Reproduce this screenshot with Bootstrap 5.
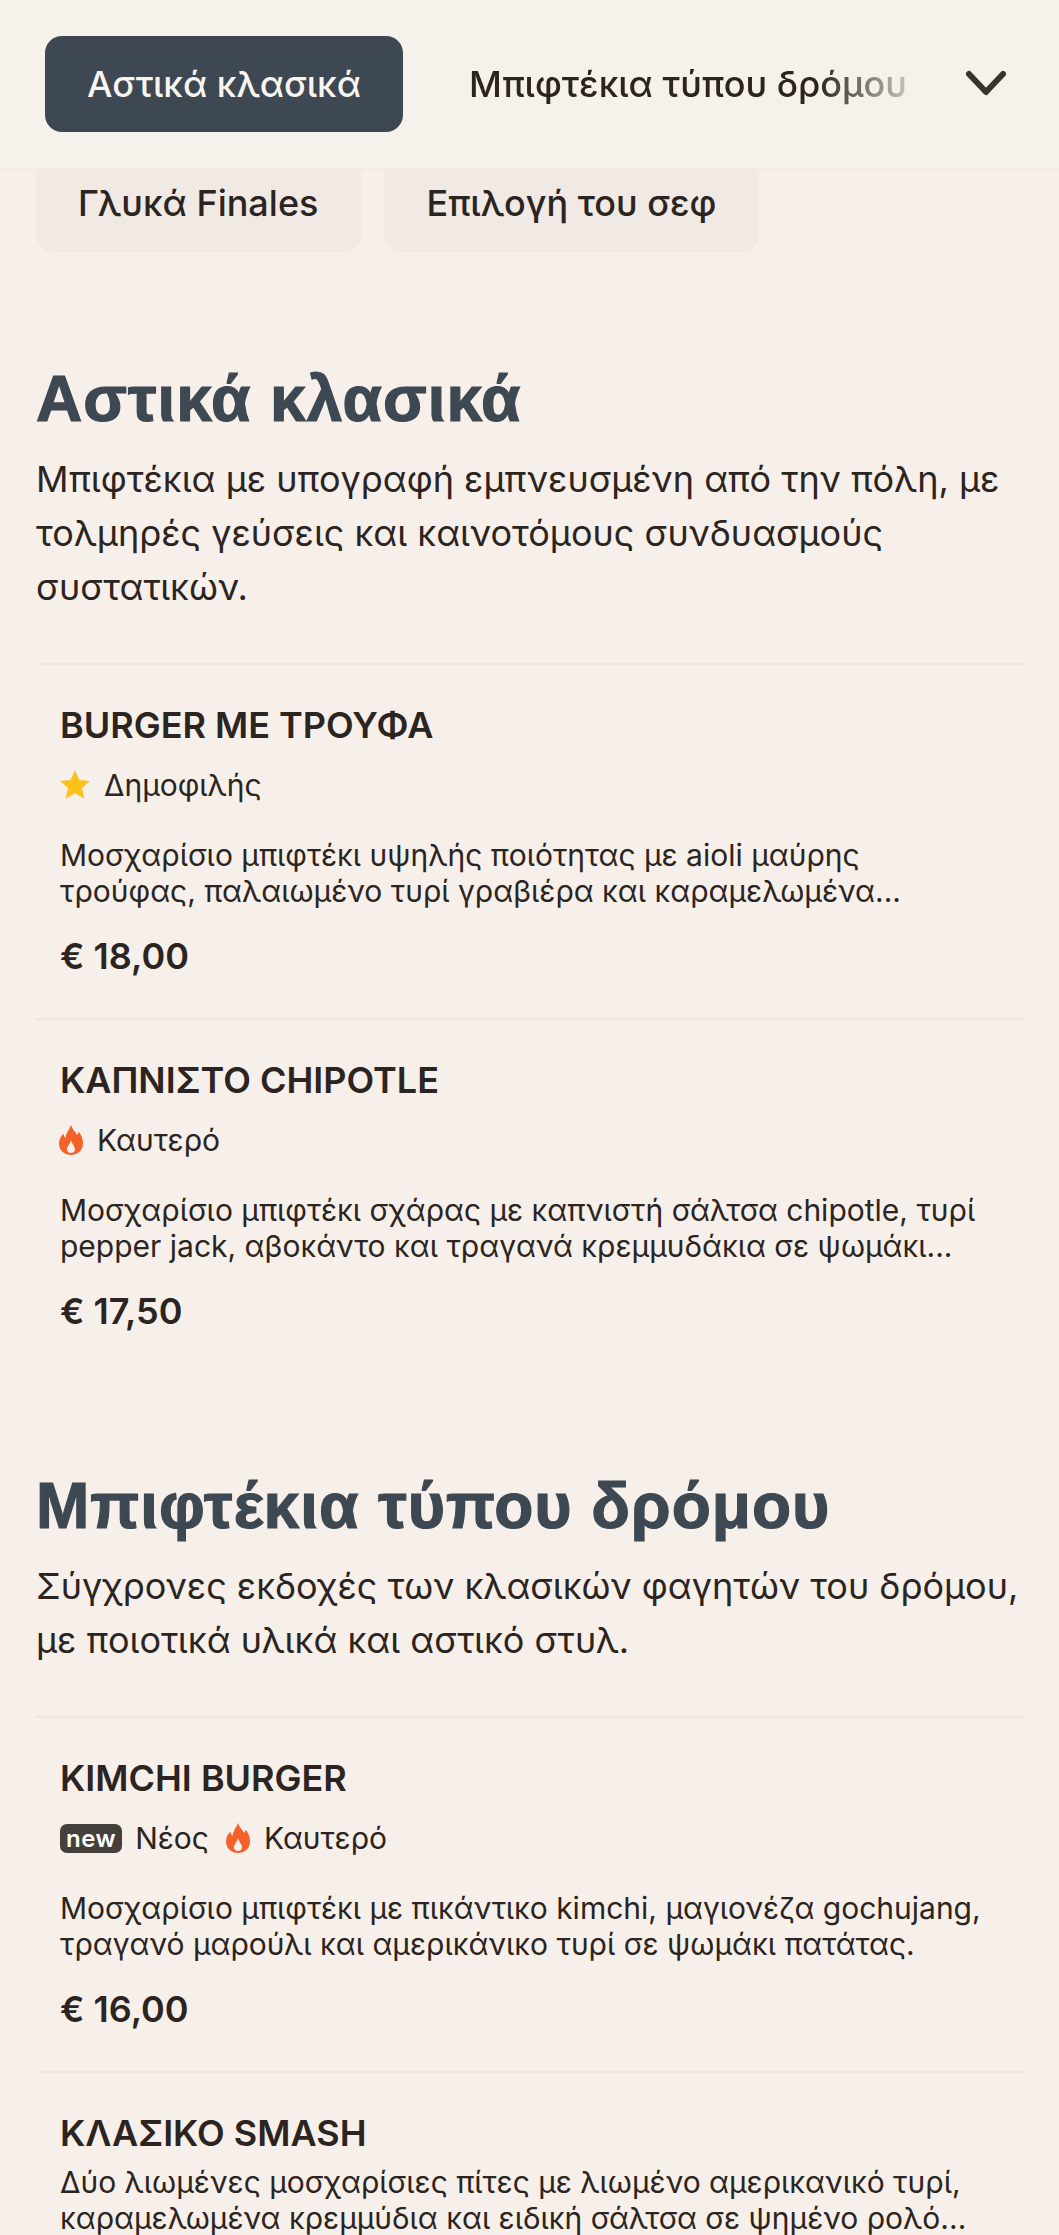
<!DOCTYPE html>
<html lang="el">
<head>
<meta charset="utf-8">
<title>Μενού</title>
<link href="https://cdn.jsdelivr.net/npm/bootstrap@5.3.0/dist/css/bootstrap.min.css" rel="stylesheet">
<style>
html,body{height:2235px;overflow:hidden;}
body{background:#f6efea;font-family:Inter,"Noto Sans",sans-serif;color:#2b2420;}
.top-strip{height:170px;padding:36px 32px 0 45px;border-bottom:2px solid #f3ece6;background:#f7f1eb;}
.tab-on{width:358px;height:96px;border-radius:17px;background:#3d4852;color:#f8f4f0;font-size:36px;font-weight:500;border:0;padding:0;}
.tab-next{margin-left:66px;width:436px;height:96px;font-size:36px;font-weight:500;white-space:nowrap;overflow:hidden;-webkit-mask-image:linear-gradient(90deg,#000 80%,rgba(0,0,0,.25) 100%);mask-image:linear-gradient(90deg,#000 80%,rgba(0,0,0,.25) 100%);}
.tab-chevron{margin-left:auto;margin-right:19px;margin-top:33px;}
.pill-row{padding:0 36px;gap:23px;}
.pill-item{height:82px;background:#f0e9e4;border-radius:0 0 17px 17px;font-size:36px;font-weight:500;padding:0 43px 0 42px;line-height:66px;}
.menu-sec{padding:0 36px;}
.sec-one{margin-top:107px;}
.sec-two{margin-top:93px;}
.sec-title{color:#3d4852;font-family:"Liberation Sans",Arial,sans-serif;font-size:64px;font-weight:700;letter-spacing:1px;-webkit-text-stroke:1.2px #3d4852;line-height:80px;margin:0 0 13px;}
.sec-text{font-size:36px;line-height:54px;margin:0 0 49px;}
.dish{border-top:2px solid #eee7e1;padding:38px 24px 0;height:355px;}
.dish-name{font-size:36px;font-weight:600;line-height:44px;margin:0;text-transform:uppercase;}
.dish-tags{font-size:30px;line-height:36px;margin-top:20px;gap:17px;}
.tag-group{gap:14px;}
.dish-desc{font-size:30px;line-height:36px;margin:34px 0 0;}
.dish-price{font-size:36px;font-weight:600;line-height:44px;margin-top:25px;}
.tag-new{background:#45403c;color:#fff;font-size:24px;font-weight:600;letter-spacing:.5px;line-height:29px;border-radius:7px;padding:0 6px;margin-right:-1px;}
.desc-tight{margin-top:9px;}
.flame-icon{margin-left:-1px;}
</style>
</head>
<body>
<div class="top-strip d-flex align-items-start">
  <button class="tab-on" type="button">Αστικά κλασικά</button>
  <div class="tab-next d-flex align-items-center">Μπιφτέκια τύπου δρόμου</div>
  <svg class="tab-chevron" width="44" height="30" viewBox="0 0 44 30"><path d="M5 5 L22 23 L39 5" fill="none" stroke="#3a3431" stroke-width="6" stroke-linecap="round" stroke-linejoin="round"/></svg>
</div>
<div class="pill-row d-flex">
  <div class="pill-item">Γλυκά Finales</div>
  <div class="pill-item">Επιλογή του σεφ</div>
</div>

<section class="menu-sec sec-one">
  <h2 class="sec-title">Αστικά κλασικά</h2>
  <p class="sec-text">Μπιφτέκια με υπογραφή εμπνευσμένη από την πόλη, με τολμηρές γεύσεις και καινοτόμους συνδυασμούς συστατικών.</p>
  <article class="dish">
    <h3 class="dish-name">Burger με τρούφα</h3>
    <div class="dish-tags d-flex align-items-center">
      <span class="d-flex align-items-center tag-group"><svg width="30" height="30" viewBox="1 1 30 30"><path d="M16 1l4.400 10 10.600 1-8 7.100 2.400 10.600L16 24.200 6.600 29.700 9 19.100 1 12l10.600-1z" fill="#fcc21b"/></svg>Δημοφιλής</span>
    </div>
    <p class="dish-desc">Μοσχαρίσιο μπιφτέκι υψηλής ποιότητας με aioli μαύρης τρούφας, παλαιωμένο τυρί γραβιέρα και καραμελωμένα...</p>
    <div class="dish-price">€ 18,00</div>
  </article>
  <article class="dish">
    <h3 class="dish-name">Καπνιστό Chipotle</h3>
    <div class="dish-tags d-flex align-items-center">
      <span class="d-flex align-items-center tag-group"><svg class="flame-icon" width="24" height="30" viewBox="0 0 24 30"><path d="M12 0C13 4 16 6 18 10C19 9 19.500 8 19.500 6.500C22.500 10 24 14 24 18.500C24 25 19 30 12 30C5 30 0 25 0 18.500C0 14 2 11 4.500 8.500C4.500 10.500 5.500 12 6.500 13C7 8 10 5 12 0ZM12 15C11.500 18.500 8 21 8 24.500C8 26.800 9.800 28 12 28C14.200 28 16 26.800 16 24.500C16 21 12.500 18.500 12 15Z" fill="#f4622a" fill-rule="evenodd"/></svg>Καυτερό</span>
    </div>
    <p class="dish-desc">Μοσχαρίσιο μπιφτέκι σχάρας με καπνιστή σάλτσα chipotle, τυρί pepper jack, αβοκάντο και τραγανά κρεμμυδάκια σε ψωμάκι...</p>
    <div class="dish-price">€ 17,50</div>
  </article>
</section>

<section class="menu-sec sec-two">
  <h2 class="sec-title">Μπιφτέκια τύπου δρόμου</h2>
  <p class="sec-text">Σύγχρονες εκδοχές των κλασικών φαγητών του δρόμου, με ποιοτικά υλικά και αστικό στυλ.</p>
  <article class="dish">
    <h3 class="dish-name">Kimchi Burger</h3>
    <div class="dish-tags d-flex align-items-center">
      <span class="d-flex align-items-center tag-group"><span class="tag-new">new</span>Νέος</span>
      <span class="d-flex align-items-center tag-group"><svg width="24" height="30" viewBox="0 0 24 30"><path d="M12 0C13 4 16 6 18 10C19 9 19.500 8 19.500 6.500C22.500 10 24 14 24 18.500C24 25 19 30 12 30C5 30 0 25 0 18.500C0 14 2 11 4.500 8.500C4.500 10.500 5.500 12 6.500 13C7 8 10 5 12 0ZM12 15C11.500 18.500 8 21 8 24.500C8 26.800 9.800 28 12 28C14.200 28 16 26.800 16 24.500C16 21 12.500 18.500 12 15Z" fill="#f4622a" fill-rule="evenodd"/></svg>Καυτερό</span>
    </div>
    <p class="dish-desc">Μοσχαρίσιο μπιφτέκι με πικάντικο kimchi, μαγιονέζα gochujang, τραγανό μαρούλι και αμερικάνικο τυρί σε ψωμάκι πατάτας.</p>
    <div class="dish-price">€ 16,00</div>
  </article>
  <article class="dish">
    <h3 class="dish-name">Κλασικό Smash</h3>
    <p class="dish-desc desc-tight">Δύο λιωμένες μοσχαρίσιες πίτες με λιωμένο αμερικανικό τυρί, καραμελωμένα κρεμμύδια και ειδική σάλτσα σε ψημένο ρολό...</p>
  </article>
</section>
<script src="https://cdn.jsdelivr.net/npm/bootstrap@5.3.0/dist/js/bootstrap.bundle.min.js"></script>
</body>
</html>
